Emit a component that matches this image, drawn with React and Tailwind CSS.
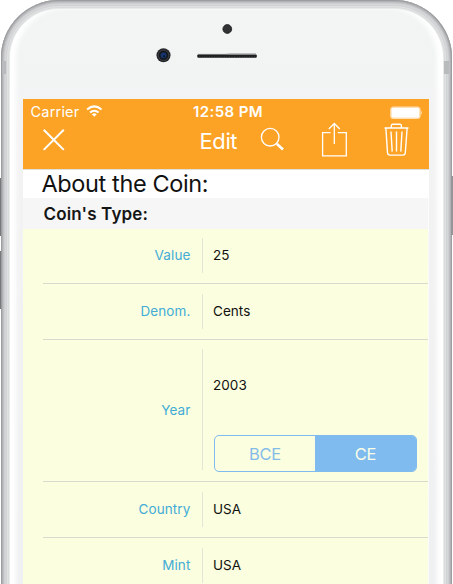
import React from "react";

function PhoneTop() {
  return (
    <div className="h-[90px] shrink-0">
      <svg width="425" height="90" viewBox="15 9 425 90" className="block">
        <circle cx="227.3" cy="29" r="4.4" fill="#303233" stroke="#17191a" strokeWidth="0.8" />
        <circle cx="163.5" cy="55.3" r="7" fill="#25272a" />
        <circle cx="163.5" cy="55.3" r="5.2" fill="#16191d" stroke="#46494d" strokeWidth="0.8" />
        <circle cx="163.5" cy="55.3" r="2.9" fill="#17356f" />
        <circle cx="164.1" cy="56.2" r="1" fill="#071022" />
        <path d="M198 54.3 H225 L230 53.5 H256" stroke="#bbbdc0" strokeWidth="1" fill="none" />
        <rect x="197.3" y="54.5" width="59.5" height="3.2" rx="1" fill="#191b1d" />
        <path d="M199 56.2 H256" stroke="#393b3d" strokeDasharray="1 1.5" />
      </svg>
    </div>
  );
}

function Navigation() {
  return (
    <header className="h-[70px] w-[406px] shrink-0 bg-[#fca326] text-white">
      <div className="flex h-[25px] items-center pt-[1px] text-[14.5px] leading-[24px]">
        <span className="ml-[7.5px] w-[55.5px] tracking-[0.2px]">Carrier</span>
        <svg width="17" height="14" viewBox="86 105 17 14" fill="none" stroke="white" strokeWidth="2">
          <path d="M87.1 109.6 Q94.3 103.2 101.5 109.6" />
          <path d="M90 112.6 Q94.3 108.9 98.6 112.6" />
          <path d="M91.9 114.3 Q94.3 112.4 96.7 114.3 L94.3 116.7Z" fill="white" stroke="none" />
        </svg>
        <span className="ml-[90px] w-[80px] text-[15px] font-semibold tracking-[0.4px]">12:58 PM</span>
        <svg className="ml-[116px]" width="34" height="15" viewBox="389 104 34 15">
          <rect x="390.2" y="105.4" width="30.4" height="12.5" rx="3.5" fill="#ffe0b3" />
          <rect x="391.7" y="107" width="27.4" height="9.6" rx="1.5" fill="white" />
          <path d="M421 109.3 Q422.5 112 421 114Z" fill="#fff2df" />
        </svg>
      </div>
      <div className="flex h-[45px]">
        <svg className="ml-[18px]" width="26" height="36" viewBox="41 124 26 36">
          <path d="M43.7 129.8 L63.8 149.9 M63.8 129.8 L43.7 149.9" stroke="white" strokeWidth="2" />
        </svg>
        <span className="ml-[132.5px] mt-[2px] w-[45.5px] text-[22px] leading-[30px] tracking-[-0.4px]">Edit</span>
        <svg className="ml-[12px]" width="30" height="36" viewBox="257 124 30 36" fill="none" stroke="white">
          <circle cx="270.2" cy="137.2" r="8.8" strokeWidth="1.3" />
          <path d="M276.4 143.4 L277.3 144.3" strokeWidth="1.5" />
          <path d="M277 144 L283 149.5" strokeWidth="2.6" />
        </svg>
        <svg className="-mt-[4px] ml-[32px]" width="30" height="40" viewBox="319 120 30 40" fill="none" stroke="white" strokeWidth="1.3">
          <path d="M330.5 132.6 H322.6 V155.8 H346.3 V132.6 H337.8 M334.3 144 V123.5 M328.8 129 L334.3 123.5 L339.8 129" />
        </svg>
        <svg className="-mt-[4px] ml-[33px]" width="30" height="40" viewBox="382 120 30 40" fill="none" stroke="white" strokeWidth="1.4">
          <path d="M384.5 128 H408.5 M391.3 127.5 V125.7 Q391.3 124.3 393 124.3 H399.8 Q401.4 124.3 401.4 125.7 V127.5 M385.9 128.5 L387.5 152.8 Q387.7 155.1 390 155.1 H402.9 Q405.1 155.1 405.3 152.8 L407.1 128.5" />
          <path d="M391 131.5 L392.2 151.6 M396.5 131.5 V151.6 M402 131.5 L400.8 151.6" />
        </svg>
      </div>
    </header>
  );
}

function DetailRow({ label, value, children, tall = false }) {
  return (
    <div className={`ml-[20px] flex w-[385px] shrink-0 border-b border-[#d8dacd] ${tall ? "h-[142px]" : "h-[56px]"}`}>
      <div className={`flex w-[159.5px] items-center justify-end border-r border-[#e3e5d5] pr-[11px] text-[13.5px] leading-[20px] tracking-[0.12px] text-[#43acd6] ${tall ? "my-[9px] h-[121px]" : "mt-[10px] h-[35px]"}`}>
        <span className={tall ? "pt-px" : "pb-px"}>{label}</span>
      </div>
      <div className={`ml-[10.5px] flex flex-col text-[13.5px] leading-[20px] tracking-[0.05px] text-[#111] ${tall ? "pt-[35px]" : "pt-[17px]"}`}>
        <span>{value}</span>
        {children}
      </div>
    </div>
  );
}

function EraControl() {
  return (
    <div className="ml-px mt-[40px] flex h-[37px] w-[203px] shrink-0 overflow-hidden rounded-[5px] border border-[#7fbbef] text-[16.5px] leading-[35px] tracking-[-0.3px]">
      <button className="w-[100px] pt-px text-[#84bce9]">BCE</button>
      <button className="flex-1 bg-[#7fbbef] pt-px text-[#fafee7]">CE</button>
    </div>
  );
}

export default function App() {
  return (
    <main className="relative h-[584px] w-[453px] overflow-hidden bg-white font-['Inter','Liberation_Sans',sans-serif]">
      <i className="absolute left-0 top-[178px] h-[58px] w-px bg-[#77797b]" />
      <i className="absolute left-0 top-[251px] h-[58px] w-px bg-[#77797b]" />
      <i className="absolute right-0 top-[176px] h-[59px] w-[2px] bg-[#94979a]" />
      <div className="ml-[0.5px] h-[700px] w-[451.5px] rounded-[58px] bg-[linear-gradient(180deg,#f3f5f5_0px,#f2f4f4_84px,#f3f3f4_109px,#eff0f1_584px)] p-[9px] shadow-[inset_0_0_0_1px_#9c9d9f,inset_0_0_0_2px_#b1b2b5,inset_0_0_0_3px_#c0c1c4,inset_0_0_0_4px_#cdced0,inset_0_0_0_5px_#d6d7d9,inset_0_0_0_6px_#d1d2d4,inset_0_0_0_7px_#e0e1e2,inset_0_0_0_8px_#d9dcdc,inset_0_0_0_9px_#e8eaea]">
        <div className="h-full rounded-[49px] shadow-[inset_8px_0_5px_-2px_white,inset_-8px_0_5px_-2px_white]">
          <div className="flex h-[575px] flex-col pl-[5.5px]">
            <PhoneTop />
            <div className="ml-[8px] flex w-[406px] flex-1 flex-col bg-[#fbfcf9]">
              <Navigation />
              <h1 className="h-[29px] shrink-0 border-t border-[#dfdfd9] bg-white pl-[18.5px] text-[23.5px] leading-[27px] tracking-[-0.38px] text-[#111]">About the Coin:</h1>
              <h2 className="h-[31px] w-[405px] shrink-0 bg-[#f6f6f6] pl-[20.5px] pt-px text-[17px] font-semibold leading-[31px] tracking-[0.15px] text-[#151515]">Coin's Type:</h2>
              <section className="h-[356px] w-[405px] overflow-hidden bg-[#fbfedf]">
                <div className="-mt-px">
                  <DetailRow label="Value" value="25" />
                  <DetailRow label="Denom." value="Cents" />
                  <DetailRow label="Year" value="2003" tall>
                    <EraControl />
                  </DetailRow>
                  <DetailRow label="Country" value="USA" />
                  <DetailRow label="Mint" value="USA" />
                </div>
              </section>
            </div>
          </div>
        </div>
      </div>
      <i className="absolute left-[2px] top-[61px] h-[13px] w-[4px] bg-[#b9babd]" />
      <i className="absolute right-[4px] top-[61px] h-[13px] w-[5px] bg-[#b8babc]" />
    </main>
  );
}
